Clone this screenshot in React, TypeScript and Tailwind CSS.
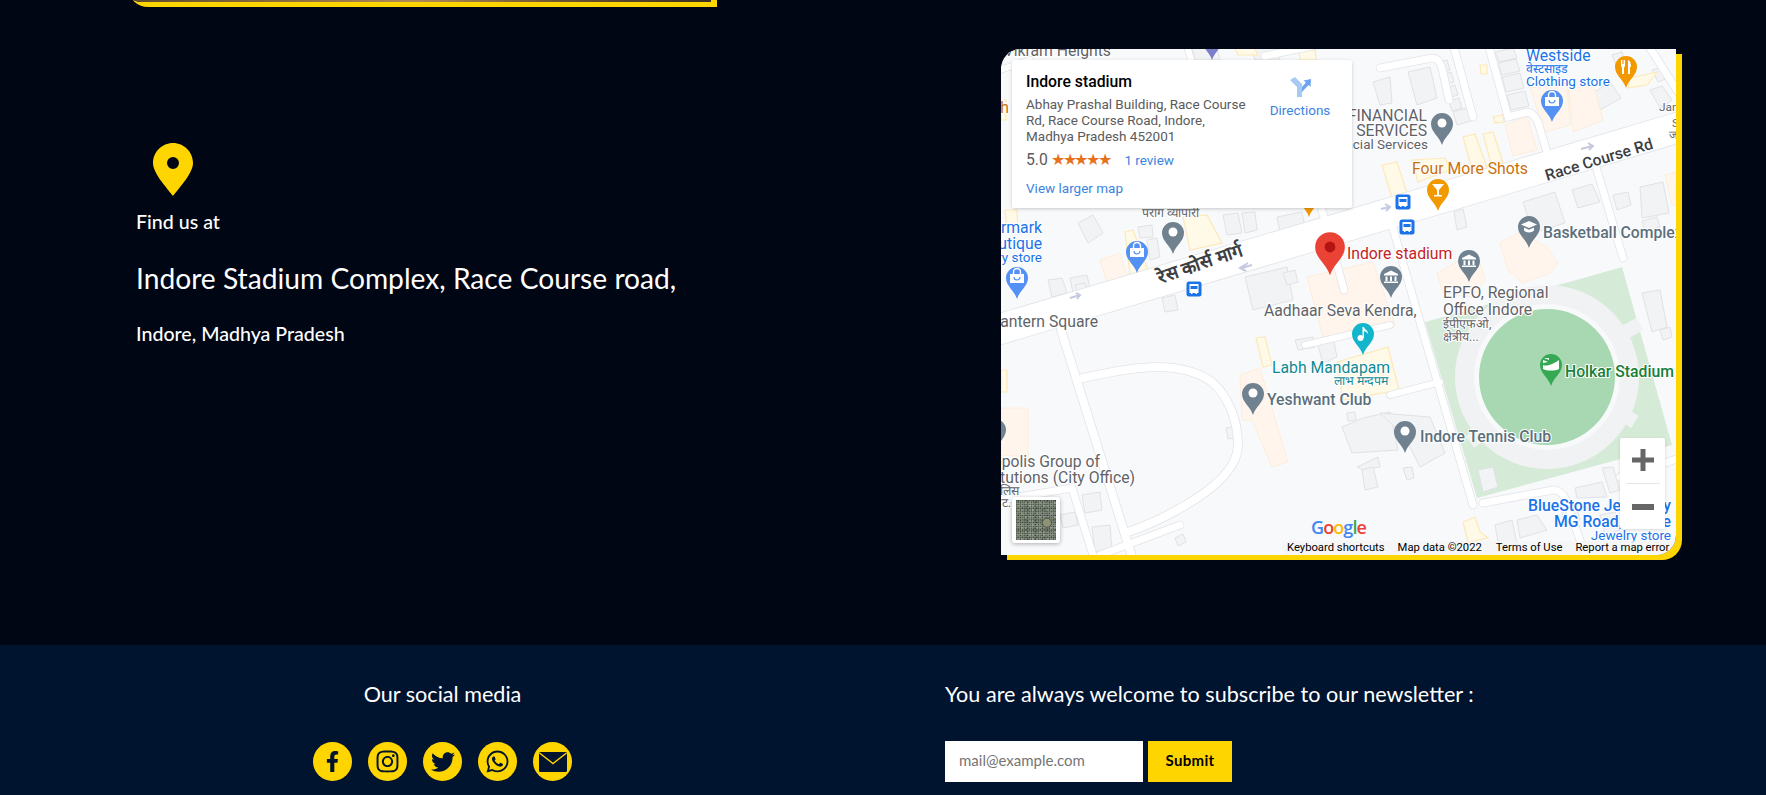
import React from "react";
import { FaFacebookF, FaInstagram, FaTwitter, FaWhatsapp } from "react-icons/fa";

type Pt = number[];
const pts = (a: Pt) => {
  let s = "";
  for (let i = 0; i < a.length; i += 2) s += `${a[i]},${a[i + 1]} `;
  return s;
};

const grey: Pt[] = [
  [1078,223,1093,215,1103,233,1088,243],[1070,278,1087,275,1090,288,1073,293],[1048,280,1062,278,1067,293,1052,297],
  [1138,227,1152,225,1153,237,1140,238],[1147,240,1157,238,1160,257,1150,260],[1223,215,1238,213,1242,233,1227,235],
  [1242,213,1255,212,1257,230,1245,233],[1277,217,1302,212,1305,227,1280,232],[1373,82,1390,77,1392,103,1380,105],
  [1245,277,1287,267,1293,300,1253,310],[1283,273,1295,270,1298,282,1287,285],[1408,72,1430,67,1437,98,1417,105],
  [1587,97,1610,82,1621,98,1600,110],[1523,202,1555,192,1565,223,1533,233],[1572,190,1592,184,1600,202,1578,208],
  [1613,195,1628,192,1631,205,1617,210],[1640,187,1663,182,1669,213,1642,218],[1642,221,1657,217,1660,227,1645,231],
  [1454,212,1463,209,1467,227,1457,230],[1295,340,1313,337,1315,347,1298,350],[1317,342,1333,337,1337,357,1323,363],
  [1342,427,1363,418,1390,412,1398,450,1352,453],[1380,413,1430,417,1445,453,1420,467,1405,437],
  [1357,467,1378,457,1380,467,1363,470],[1362,470,1373,467,1378,487,1365,490],[1347,413,1355,412,1356,420,1348,421],
  [1226,428,1233,427,1234,438,1228,439],[1082,495,1100,492,1102,510,1085,513],[1092,527,1110,525,1112,550,1095,552],
  [1175,538,1183,534,1186,542,1178,546],[1403,468,1412,467,1414,478,1407,480],[1478,470,1493,467,1498,487,1483,492],
  [1575,488,1602,482,1607,497,1577,498],[1602,468,1613,467,1620,490,1610,493],[1517,520,1537,515,1547,530,1520,538],
  [1642,293,1660,290,1667,327,1652,332],[1660,330,1670,327,1672,337,1663,340],[1437,62,1447,60,1450,70,1440,72],
  [1441,75,1451,72,1454,82,1444,85],[1445,88,1455,85,1458,95,1448,98],[1449,101,1459,98,1462,108,1452,111],
  [1453,112,1470,107,1474,120,1457,125],[1495,52,1513,48,1517,58,1499,62],
  [1498,63,1516,59,1520,71,1502,75],[1502,77,1520,73,1524,88,1506,92],[1507,95,1525,91,1529,106,1511,110],
  [1612,55,1622,52,1625,62,1616,65],[1652,70,1662,67,1668,78,1658,82],[1650,90,1662,86,1672,100,1660,108],
  [1075,285,1085,283,1088,295,1078,297],[1190,40,1215,40,1220,60,1195,60],[1250,45,1275,45,1280,60,1255,60],
  [1162,298,1175,295,1178,310,1165,312],[1560,505,1575,502,1580,520,1565,525],[1495,525,1512,520,1518,548,1500,552],
  [1600,515,1615,512,1620,530,1605,535],[1060,515,1075,512,1078,525,1063,528],
];
const orange: Pt[] = [
  [1505,125,1527,116,1537,150,1513,156],[1530,88,1567,83,1570,125,1545,132],[1568,85,1593,83,1603,120,1573,132],
  [1500,243,1520,232,1547,247,1558,263,1550,273,1523,283,1508,270],[1437,273,1457,262,1480,263,1485,280,1473,297,1443,293],
  [1307,277,1373,262,1395,325,1323,337],[1240,375,1260,368,1288,462,1272,467,1252,420,1242,420],
  [1001,408,1028,408,1028,457,1001,455],[1100,260,1120,253,1128,280,1108,285],[1665,175,1676,172,1676,205,1672,205],
];
const yellow: Pt[] = [
  [1256,338,1265,337,1272,365,1263,367],[1337,362,1388,347,1399,390,1343,400],[1183,217,1207,215,1222,243,1190,250],
  [1463,137,1475,134,1487,168,1473,173],[1483,134,1493,132,1503,163,1492,167],[1382,165,1397,162,1407,193,1392,198],
  [1480,65,1487,65,1487,74,1481,74],[1493,117,1503,115,1504,122,1495,123],[1552,152,1562,150,1563,154,1553,157],
  [1630,78,1657,72,1647,85,1628,88],[1463,522,1475,517,1480,532,1488,538,1468,542],[1005,210,1017,210,1018,230,1007,230],
  [1001,370,1007,370,1007,392,1001,392],[1125,232,1133,230,1148,270,1130,276],[1412,160,1445,158,1450,170,1418,182],
  [1231,40,1250,40,1258,55,1238,55],[1299,50,1315,50,1316,60,1300,60],[1001,100,1006,100,1006,120,1001,120],
];
const roads: { w: number; d: string }[] = [
  { w: 30, d: "M990 332 L1690 124" },
  { w: 8, d: "M1061 330 L1133 560" },
  { w: 8, d: "M1083 378 C1110 372 1135 367 1157 367 C1180 367 1198 372 1212 382 C1228 396 1238 420 1238 445 C1238 470 1210 492 1177 510 C1160 520 1145 526 1128 532" },
  { w: 7, d: "M1392 225 L1473 505" },
  { w: 7, d: "M1452 40 L1473 117" },
  { w: 7, d: "M1487 40 L1508 117 L1527 112 C1532 112 1535 116 1538 122 L1548 156" },
  { w: 7, d: "M1597 170 L1623 258" },
  { w: 7, d: "M1648 45 L1680 95" },
  { w: 7, d: "M1483 503 L1553 490 C1560 490 1564 494 1567 503 L1587 560" },
  { w: 7, d: "M1620 477 L1680 458" },
  { w: 7, d: "M1265 56 L1360 36" },
  { w: 7, d: "M1380 68 L1432 58 C1437 58 1440 62 1442 68 L1449 100" },
  { w: 7, d: "M1322 210 L1344 290" },
  { w: 7, d: "M1001 500 L1072 488 L1093 555" },
  { w: 7, d: "M1100 555 L1180 525" },
  { w: 6, d: "M1000 70 L1030 60" },
  { w: 6, d: "M1185 40 L1210 120" },
  { w: 6, d: "M1305 345 L1390 325" },
  { w: 6, d: "M1390 395 L1440 382" },
];

type Glyph = "dot" | "bag" | "fork" | "cup" | "cap" | "bank" | "music" | "stadium" | "red";
function Pin({ x, y, c, g = "dot" }: { x: number; y: number; c: string; g?: Glyph }) {
  const k = g === "red" ? 1.35 : 1;
  return (
    <g transform={`translate(${x} ${y}) scale(${k})`}>
      <path d="M-11 0 A11 11 0 1 1 11 0 C11 8 3 12 0 21 C-3 12 -11 8 -11 0 Z" fill={c} />
      {g === "dot" && <circle r="4.5" cy="-1" fill="#fff" />}
      {g === "red" && <circle r="4" cy="0" fill="#b31412" />}
      {g === "bag" && (
        <g>
          <path d="M-7 -4 H7 V5 H-7 Z" fill="#fff" />
          <path d="M-3.5 -4 V-6 A3.5 3.5 0 0 1 3.5 -6 V-4" fill="none" stroke="#fff" strokeWidth="1.4" />
          <path d="M-3 -1 A3 3 0 0 0 3 -1" fill="none" stroke={c} strokeWidth="1.2" />
        </g>
      )}
      {g === "fork" && (
        <path d="M-5 -7 V-2 C-5 0 -4 0 -4 1 V7 H-2 V1 C-2 0 -1 0 -1 -2 V-7 H-2 V-3 H-2.6 V-7 H-3.4 V-3 H-4 V-7 Z M2 -7 C4.5 -6 5 -3 5 0 H4 V7 H2 Z" fill="#fff" />
      )}
      {g === "cup" && <path d="M-6 -6 H6 L1 0 V5 H4 V6.5 H-4 V5 H-1 V0 Z" fill="#fff" />}
      {g === "cap" && (
        <g fill="#fff">
          <path d="M-8 -2.5 L0 -6 L8 -2.5 L0 1 Z" />
          <path d="M-5 0.5 V3.5 C-3 6 3 6 5 3.5 V0.5 L0 2.8 Z" />
        </g>
      )}
      {g === "bank" && (
        <g fill="#fff">
          <path d="M-7 -3 L0 -6.5 L7 -3 V-1.5 H-7 Z" />
          <path d="M-5.5 -0.5 H-3.5 V4 H-5.5 Z M-1 -0.5 H1 V4 H-1 Z M3.5 -0.5 H5.5 V4 H3.5 Z M-7 4.5 H7 V6 H-7 Z" />
        </g>
      )}
      {g === "music" && (
        <g fill="#fff">
          <circle cx="-2.5" cy="4" r="3" />
          <path d="M-0.5 4 V-7 L1 -7 C1.5 -4 5.5 -4 5 0 C4 -2 2.5 -2.5 1 -3 V4 Z" />
        </g>
      )}
      {g === "stadium" && (
        <g fill="#fff">
          <path d="M-8 -5 L-3 -3 L-8 -2 Z M-7 -7 L-2 -5 L-2 -7 Z" />
          <path d="M-8 0 C-4 2 4 -2 8 -5 V4 C4 6 -4 6 -8 4 Z" />
        </g>
      )}
    </g>
  );
}

function Bus({ x, y }: { x: number; y: number }) {
  return (
    <g transform={`translate(${x} ${y})`}>
      <rect x="-7.5" y="-7.5" width="15" height="15" rx="2.5" fill="#1a73e8" />
      <path d="M-4.5 -5 H4.5 V4 H3 V5 H1.5 V4 H-1.5 V5 H-3 V4 H-4.5 Z" fill="#fff" />
      <rect x="-3.5" y="-3" width="7" height="3" fill="#1a73e8" />
    </g>
  );
}

const haloCls = "[paint-order:stroke] [stroke:#ffffff] [stroke-width:2px] [stroke-linejoin:round]";
function L({ x, y, s = 14, c = "#5f6368", w = 400, a = "start", r, t }: { x: number; y: number; s?: number; c?: string; w?: number; a?: "start" | "end" | "middle"; r?: number; t: string }) {
  return (
    <text
      x={x}
      y={y}
      fontSize={s * 1.125}
      fill={c}
      fontWeight={w}
      textAnchor={a}
      transform={r ? `rotate(${r} ${x} ${y})` : undefined}
      className={haloCls}
    >
      {t}
    </text>
  );
}

const GREY = "#70818f";
const BLUE = "#5491f5";
const ORANGE = "#f29900";
const BL = "#1a73e8";
const LAB = "#5b6f7d";
const TEAL = "#0f8a94";

function MapDrawing() {
  return (
    <svg viewBox="1001 49 675 506" className="block w-full h-full font-['Roboto','Noto_Sans_CJK_SC','DejaVu_Sans',sans-serif]">
      <rect x="1001" y="49" width="675" height="506" fill="#f8f9fb" />
      <polygon points={pts([1425,322,1587,277,1622,267,1672,445,1477,498])} fill="#d5ebd8" />
      <circle cx="1547" cy="377" r="92" fill="#f1f2f3" />
      <circle cx="1547" cy="377" r="73" fill="#f8f9fa" />
      <circle cx="1547" cy="377" r="68" fill="#a8d8b1" />
      <path d="M1504 298 L1492 304 M1625 332 L1640 324 M1635 422 L1622 414 M1470 442 L1484 432" stroke="#f1f2f3" strokeWidth="14" />
      {grey.map((p, i) => <polygon key={i} points={pts(p)} fill="#f1f3f4" stroke="#e0e2e6" strokeWidth="1" />)}
      {orange.map((p, i) => <polygon key={i} points={pts(p)} fill="#fff5ec" stroke="#fdeeda" strokeWidth="1" />)}
      {yellow.map((p, i) => <polygon key={i} points={pts(p)} fill="#fff9e8" stroke="#fde9b8" strokeWidth="1.2" />)}
      {roads.map((r, i) => <path key={i} d={r.d} fill="none" stroke="#e2e4e9" strokeWidth={r.w + 1.6} strokeLinecap="round" />)}
      {roads.map((r, i) => <path key={i} d={r.d} fill="none" stroke="#ffffff" strokeWidth={r.w} strokeLinecap="round" />)}

      <path d="M1070 298 L1080 295 M1076 293 L1080 295 L1077 299" stroke="#c5cae0" strokeWidth="2" fill="none" />
      <path d="M1242 268 L1252 265 M1248 263 L1240 268 L1246 271" stroke="#c5cae0" strokeWidth="2" fill="none" />
      <path d="M1381 209 L1389 207 M1385 204 L1390 207 L1386 211" stroke="#c5cae0" strokeWidth="2" fill="none" />
      <path d="M1581 149 L1592 146 M1588 143 L1593 146 L1589 150" stroke="#c5cae0" strokeWidth="2" fill="none" />

      <L x={1111} y={56} a="end" t="Vikram Heights" />
      <L x={1526} y={61} c={BL} t="Westside" />
      <L x={1526} y={73} s={11} c={BL} t="वेस्टसाइड" />
      <L x={1526} y={86} s={12} c={BL} t="Clothing store" />
      <L x={1427} y={121} a="end" t="FINANCIAL" />
      <L x={1427} y={136} a="end" t="SERVICES" />
      <L x={1428} y={149} a="end" s={12} t="Financial Services" />
      <L x={1412} y={174} c="#c9700b" t="Four More Shots" />
      <L x={1547} y={181} c="#3c4043" w={500} r={-17} t="Race Course Rd" />
      <L x={1543} y={238} c={LAB} w={500} t="Basketball Complex" />
      <L x={1347} y={259} c="#c5221f" t="Indore stadium" />
      <L x={1443} y={298} t="EPFO, Regional" />
      <L x={1443} y={315} t="Office Indore" />
      <L x={1443} y={328} s={11} t="ईपीएफओ," />
      <L x={1443} y={341} s={11} t="क्षेत्रीय..." />
      <L x={1264} y={316} t="Aadhaar Seva Kendra," />
      <L x={1272} y={373} c={TEAL} t="Labh Mandapam" />
      <L x={1334} y={385} s={11} c={TEAL} t="लाभ मन्दपम" />
      <L x={1267} y={405} c={LAB} w={500} t="Yeshwant Club" />
      <L x={1420} y={442} c={LAB} w={500} t="Indore Tennis Club" />
      <L x={1565} y={377} c="#188038" w={500} t="Holkar Stadium" />
      <L x={1671} y={511} a="end" c={BL} w={500} t="BlueStone Jewellery" />
      <L x={1671} y={527} a="end" c={BL} w={500} t="MG Road, Indore" />
      <L x={1671} y={540} a="end" s={12} c={BL} t="Jewelry store" />
      <L x={1098} y={327} a="end" t="Lantern Square" />
      <L x={1100} y={467} a="end" t="Metropolis Group of" />
      <L x={1135} y={483} a="end" t="Institutions (City Office)" />
      <L x={1019} y={495} a="end" s={11} t="पुलिस" />
      <L x={1011} y={507} a="end" s={11} t="ऑट." />
      <L x={1042} y={233} a="end" c={BL} t="Watermark" />
      <L x={1042} y={249} a="end" c={BL} t="Boutique" />
      <L x={1042} y={262} a="end" s={12} c={BL} t="Jewelry store" />
      <L x={1142} y={217} s={11} t="पराग व्यापारी" />
      <L x={1160} y={284} s={16.5} c="#3c4043" w={700} r={-19} t="रेस कोर्स मार्ग" />
      <L x={1009} y={113} a="end" c="#c9700b" t="Bh" />
      <L x={1659} y={111} s={10.5} t="Jan" />
      <L x={1672} y={127} s={10.5} t="S" />
      <L x={1669} y={139} s={10.5} t="ज" />

      <Pin x={1212} y={39} c="#7b7fc9" />
      <Pin x={1173} y={233} c={GREY} />
      <Pin x={1137} y={252} c={BLUE} g="bag" />
      <Pin x={1017} y={278} c={BLUE} g="bag" />
      <Pin x={1442} y={124} c={GREY} />
      <Pin x={1552} y={101} c={BLUE} g="bag" />
      <Pin x={1626} y={67} c={ORANGE} g="fork" />
      <Pin x={1438} y={190} c={ORANGE} g="cup" />
      <Pin x={1309} y={196} c={ORANGE} />
      <Pin x={1529} y={227} c={GREY} g="cap" />
      <Pin x={1469} y={261} c={GREY} g="bank" />
      <Pin x={1391} y={277} c={GREY} g="bank" />
      <Pin x={1363} y={334} c="#12b5cb" g="music" />
      <Pin x={1253} y={394} c={GREY} />
      <Pin x={1405} y={432} c={GREY} />
      <Pin x={1551} y={365} c="#34a853" g="stadium" />
      <Pin x={995} y={430} c={GREY} />
      <Pin x={1330} y={247} c="#ea4335" g="red" />
      <Bus x={1194} y={289} />
      <Bus x={1403} y={202} />
      <Bus x={1407} y={227} />

      <text x="1311" y="534" fontSize="18" fontWeight="600" fontFamily="'Open Sans',sans-serif" letterSpacing="-0.9">
        <tspan fill="#4285f4">G</tspan>
        <tspan fill="#ea4335">o</tspan>
        <tspan fill="#fbbc05">o</tspan>
        <tspan fill="#4285f4">g</tspan>
        <tspan fill="#34a853">l</tspan>
        <tspan fill="#ea4335">e</tspan>
      </text>
    </svg>
  );
}

const satCols = ["#4f5c4b", "#6a7163", "#3c4a3a", "#7d8073", "#566350", "#8a8c7f", "#323f31", "#5f6857"];
function SatThumb() {
  const cells: React.ReactNode[] = [];
  for (let y = 0; y < 22; y++)
    for (let x = 0; x < 22; x++) {
      const h = (x * 73 + y * 151 + x * y * 17 + ((x ^ y) * 29)) % 8;
      cells.push(<rect key={`${x}-${y}`} x={x * 2} y={y * 2} width="2" height="2" fill={satCols[h]} />);
    }
  return (
    <svg viewBox="0 0 44 44" className="block w-full h-full">
      {cells}
      <circle cx="34" cy="25" r="5" fill="#8f9274" stroke="#4a5142" />
    </svg>
  );
}

function MapPanel() {
  return (
    <div className="relative w-[675px] h-[506px] overflow-hidden rounded-tl-[20px] rounded-br-[20px] shadow-[6px_5px_0_0_#ffd500] font-['Roboto',sans-serif]">
      <MapDrawing />
      <div className="absolute left-[11px] top-[11px] w-[340px] h-[148px] rounded-[2px] bg-white shadow-[0_1px_4px_-1px_rgba(0,0,0,0.3)] pl-[14px] pt-[10px]">
        <div className="flex">
          <div className="w-[225px]">
            <div className="text-[15.75px] leading-[23px] font-medium text-black">Indore stadium</div>
            <div className="mt-[3px] text-[13.5px] leading-[16px] text-[#5b5b5b]">
              Abhay Prashal Building, Race Course Rd, Race Course Road, Indore, Madhya Pradesh 452001
            </div>
            <div className="mt-[5px] flex items-center text-[#5b5b5b]">
              <span className="text-[15.75px] leading-[22px] mr-[3px]">5.0</span>
              <span className="text-[#e7711b] text-[16px] tracking-[-2.3px] leading-none">★★★★★</span>
              <span className="ml-[15px] text-[13.5px] text-[#3a84df]">1 review</span>
            </div>
            <div className="mt-[8px] text-[13.5px] leading-[18px] text-[#3a84df]">View larger map</div>
          </div>
          <div className="ml-[10px] w-[78px] flex flex-col items-center pt-[6px]">
            <svg width="22" height="22" viewBox="0 0 22 22">
              <path d="M1 4 L6 1 L13 8 L13 21 H8 V11 Z" fill="#a9c9f5" />
              <path d="M13 11 L17 6.5 L14.5 4.5 L22 3 L21.5 11 L19.5 9 L13 16 Z" fill="#6ca4f2" />
            </svg>
            <span className="mt-[3px] text-[13.5px] leading-[18px] text-[#3a84df] whitespace-nowrap">Directions</span>
          </div>
        </div>
      </div>
      <div className="absolute left-[11px] bottom-[12px] w-[48px] h-[46px] rounded-[3px] bg-white p-[3px] shadow-[0_1px_4px_rgba(0,0,0,0.3)]">
        <SatThumb />
      </div>
      <div className="absolute right-[11px] bottom-[26px] w-[45px] h-[91px] bg-white rounded-[2px] flex flex-col items-center shadow-[0_1px_4px_-1px_rgba(0,0,0,0.2)]">
        <svg width="22" height="22" viewBox="0 0 22 22" className="mt-[11px]"><path d="M8.5 0 H13.5 V8.5 H22 V13.5 H13.5 V22 H8.5 V13.5 H0 V8.5 H8.5 Z" fill="#666" /></svg>
        <div className="mt-[12px] w-[34px] h-px bg-[#e6e6e6]" />
        <svg width="22" height="6" viewBox="0 0 22 6" className="mt-[20px]"><rect width="22" height="6" fill="#666" /></svg>
      </div>
      <div className="absolute right-0 bottom-0 w-[393px] h-[14px] bg-[rgba(245,245,245,0.7)] text-[11.25px] leading-[14px] text-black whitespace-nowrap">
        <div className="flex">
          <span className="ml-[4px]">Keyboard shortcuts</span>
          <span className="ml-[13px]">Map data ©2022</span>
          <span className="ml-[14px]">Terms of Use</span>
          <span className="ml-[13px]">Report a map error</span>
        </div>
      </div>
    </div>
  );
}

function PinIcon() {
  return (
    <svg width="40" height="53" viewBox="0 0 40 53" className="block">
      <path fillRule="evenodd" d="M20 0 C31 0 40 9 40 20 C40 30 27 44 20 53 C13 44 0 30 0 20 C0 9 9 0 20 0 Z M20 14 A6 6 0 1 0 20 26 A6 6 0 1 0 20 14 Z" fill="#ffd500" />
    </svg>
  );
}

function MailIcon() {
  return (
    <svg width="28" height="20" viewBox="0 0 28 20" className="block">
      <rect width="28" height="20" rx="1.5" fill="#00132f" />
      <path d="M0.5 1 L14 11.5 L27.5 1" fill="none" stroke="#ffd500" strokeWidth="1.4" />
    </svg>
  );
}

const socials = [
  <FaFacebookF key="f" size={21} />,
  <FaInstagram key="i" size={25} />,
  <FaTwitter key="t" size={24} />,
  <FaWhatsapp key="w" size={25} />,
  <MailIcon key="m" />,
];

export default function App() {
  return (
    <div className="h-[795px] overflow-hidden bg-[#000614] font-['Lato',sans-serif] text-white">
      <div className="flex h-[7px] items-start">
        <div className="ml-[122px] -mt-[48px] h-[50px] w-[589px] shrink-0 rounded-bl-[20px] bg-[linear-gradient(90deg,#5c4a2e,#8a6a3a,#b08b55,#6d5330,#3d3020)] shadow-[6px_5px_0_0_#ffd500]" />
      </div>
      <section className="h-[638px] flex items-start justify-between pl-[136px] pr-[90px]">
        <div className="pt-[136px]">
          <div className="pl-[17px]"><PinIcon /></div>
          <p className="mt-[14px] text-[19.6px] leading-[24px] font-medium">Find us at</p>
          <h2 className="mt-[27px] text-[28.2px] leading-[34px] font-normal">Indore Stadium Complex, Race Course road,</h2>
          <p className="mt-[27px] text-[19.6px] leading-[24px] font-medium">Indore, Madhya Pradesh</p>
        </div>
        <div className="pt-[42px]">
          <MapPanel />
        </div>
      </section>
      <footer className="h-[150px] bg-[#00132f] flex">
        <div className="w-[885px] flex flex-col items-center pt-[36px]">
          <h3 className="text-[21.6px] leading-[26px] font-normal">Our social media</h3>
          <div className="mt-[35px] flex gap-[16px]">
            {socials.map((s, i) => (
              <span key={i} className="w-[39px] h-[39px] rounded-full bg-[#ffd500] text-[#00132f] flex items-center justify-center">{s}</span>
            ))}
          </div>
        </div>
        <div className="pl-[60px] pt-[36px]">
          <h3 className="text-[21.6px] leading-[26px] font-normal">You are always welcome to subscribe to our newsletter :</h3>
          <div className="mt-[34px] flex gap-[5px]">
            <input placeholder="mail@example.com" className="w-[198px] h-[41px] bg-white px-[14px] pb-[3px] text-[15px] text-black placeholder:text-[#757575] outline-none" />
            <button className="w-[84px] h-[41px] bg-[#ffd500] pb-[2px] text-black text-[15px] font-bold tracking-[0.3px]">Submit</button>
          </div>
        </div>
      </footer>
    </div>
  );
}
